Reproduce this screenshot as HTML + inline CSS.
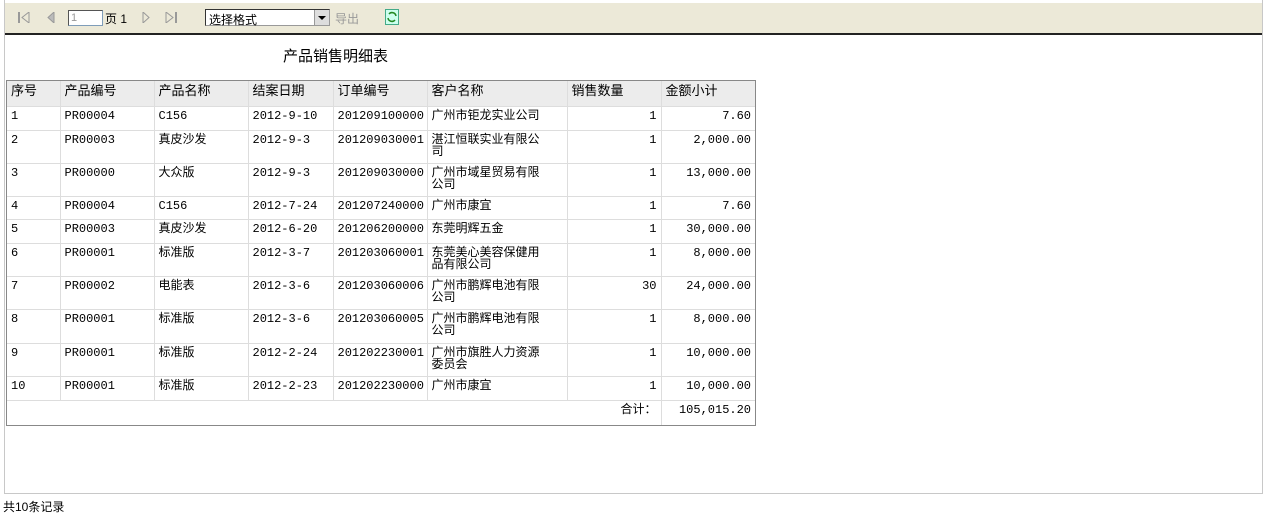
<!DOCTYPE html>
<html><head><meta charset="utf-8"><style>
body{margin:0;width:1265px;height:515px;background:#fff;font-family:"Liberation Mono","Noto Sans CJK SC",monospace;font-size:12px;color:#000;position:relative;overflow:hidden}
.frame{position:absolute;left:4px;top:0;width:1257px;height:493px;border:1px solid #c8c8c8;border-top:none}
.tb{position:absolute;left:5px;top:3px;width:1257px;height:30px;background:#ece9d8;border-bottom:2px solid #222}
.t{position:absolute;font-family:"Liberation Sans","Noto Sans CJK SC",sans-serif;font-size:12px}
.title{position:absolute;left:283px;top:45px;font-size:15px;font-family:"Liberation Sans","Noto Sans CJK SC",sans-serif}
.wrap{position:absolute;left:6px;top:80px;border:1px solid #888}
table{border-collapse:collapse;border-style:hidden;table-layout:fixed}
td{border:1px solid #ddd;vertical-align:top;padding:3px 4px 0 4px;line-height:12px;font-family:"Liberation Mono","Noto Sans CJK SC",monospace;font-size:12px;overflow:hidden}
tr{height:24px}
tr.h td{background:#ececec;height:21px;padding-top:4px;font-family:"Liberation Sans","Noto Sans CJK SC",sans-serif;font-size:13px}
tr.d{height:33px}
.r{text-align:right}
.foot{position:absolute;left:3px;top:498px;font-family:"Liberation Sans","Noto Sans CJK SC",sans-serif;font-size:12px}
</style></head><body>
<div class="frame"></div>
<div class="tb">
<svg style="position:absolute;left:12px;top:9px" width="14" height="11"><rect x="1" y="0" width="2" height="11" fill="#999"/><path d="M12 0 L5 5.5 L12 11Z" fill="none" stroke="#999"/></svg>
<svg style="position:absolute;left:42px;top:9px" width="10" height="11"><path d="M7 0 L1 5.5 L7 11Z" fill="#bbb" stroke="#999"/></svg>
<div style="position:absolute;left:63px;top:7px;width:31px;height:14px;background:#fff;border:1px solid #7f9db9;border-top-color:#555;border-left-color:#555;font-size:11px;color:#999;font-family:'Liberation Sans';line-height:14px;padding-left:2px">1</div>
<div class="t" style="left:100px;top:7px">页 1</div>
<svg style="position:absolute;left:136px;top:9px" width="10" height="11"><path d="M2 0 L8 5.5 L2 11Z" fill="none" stroke="#999"/></svg>
<svg style="position:absolute;left:160px;top:9px" width="14" height="11"><path d="M1 0 L8 5.5 L1 11Z" fill="none" stroke="#999"/><rect x="10" y="0" width="2" height="11" fill="#999"/></svg>
<div style="position:absolute;left:200px;top:6px;width:123px;height:15px;background:#fff;border:1px solid #333;border-right-color:#999;border-bottom-color:#999"><span class="t" style="left:3px;top:1px">选择格式</span><div style="position:absolute;right:0;top:0;width:14px;height:15px;background:#ddd;border-left:1px solid #999"><svg width="14" height="15"><path d="M3 6 L11 6 L7 10Z" fill="#000"/></svg></div></div>
<div class="t" style="left:330px;top:7px;color:#999">导出</div>
<svg style="position:absolute;left:380px;top:6px" width="14" height="16"><rect x="0.5" y="0.5" width="13" height="15" fill="#cfe" stroke="#4a8"/><path d="M4 5 A4 4 0 0 1 11 7 M10 11 A4 4 0 0 1 3 9" fill="none" stroke="#282" stroke-width="1.5"/></svg>
</div>
<div class="title">产品销售明细表</div>
<div class="wrap">
<table style="width:748px">
<colgroup><col style="width:53px"><col style="width:94px"><col style="width:94px"><col style="width:85px"><col style="width:94px"><col style="width:140px"><col style="width:94px"><col style="width:94px"></colgroup>
<tr class="h"><td>序号</td><td>产品编号</td><td>产品名称</td><td>结案日期</td><td>订单编号</td><td>客户名称</td><td>销售数量</td><td>金额小计</td></tr>
<tr><td>1</td><td>PR00004</td><td>C156</td><td>2012-9-10</td><td>201209100000</td><td>广州市钜龙实业公司</td><td class="r">1</td><td class="r">7.60</td></tr>
<tr class="d"><td>2</td><td>PR00003</td><td>真皮沙发</td><td>2012-9-3</td><td>201209030001</td><td>湛江恒联实业有限公<br>司</td><td class="r">1</td><td class="r">2,000.00</td></tr>
<tr class="d"><td>3</td><td>PR00000</td><td>大众版</td><td>2012-9-3</td><td>201209030000</td><td>广州市域星贸易有限<br>公司</td><td class="r">1</td><td class="r">13,000.00</td></tr>
<tr style="height:23px"><td>4</td><td>PR00004</td><td>C156</td><td>2012-7-24</td><td>201207240000</td><td>广州市康宜</td><td class="r">1</td><td class="r">7.60</td></tr>
<tr><td>5</td><td>PR00003</td><td>真皮沙发</td><td>2012-6-20</td><td>201206200000</td><td>东莞明辉五金</td><td class="r">1</td><td class="r">30,000.00</td></tr>
<tr class="d"><td>6</td><td>PR00001</td><td>标准版</td><td>2012-3-7</td><td>201203060001</td><td>东莞美心美容保健用<br>品有限公司</td><td class="r">1</td><td class="r">8,000.00</td></tr>
<tr class="d"><td>7</td><td>PR00002</td><td>电能表</td><td>2012-3-6</td><td>201203060006</td><td>广州市鹏辉电池有限<br>公司</td><td class="r">30</td><td class="r">24,000.00</td></tr>
<tr class="d" style="height:34px"><td>8</td><td>PR00001</td><td>标准版</td><td>2012-3-6</td><td>201203060005</td><td>广州市鹏辉电池有限<br>公司</td><td class="r">1</td><td class="r">8,000.00</td></tr>
<tr class="d"><td>9</td><td>PR00001</td><td>标准版</td><td>2012-2-24</td><td>201202230001</td><td>广州市旗胜人力资源<br>委员会</td><td class="r">1</td><td class="r">10,000.00</td></tr>
<tr><td>10</td><td>PR00001</td><td>标准版</td><td>2012-2-23</td><td>201202230000</td><td>广州市康宜</td><td class="r">1</td><td class="r">10,000.00</td></tr>
<tr style="height:24px"><td colspan="7" class="r">合计：</td><td class="r">105,015.20</td></tr>
</table>
</div>
<div class="foot">共10条记录</div>
</body></html>
